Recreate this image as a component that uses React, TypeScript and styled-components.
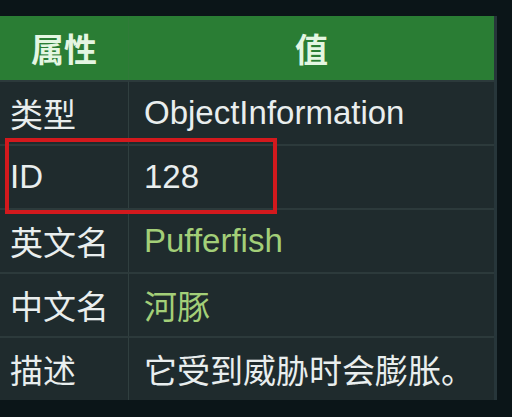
import React from "react";
import styled, { createGlobalStyle } from "styled-components";

const Global = createGlobalStyle`
  html, body { margin: 0; padding: 0; background: #0b1518; }
  body { font-family: "Liberation Sans", "Noto Sans CJK SC", sans-serif; }
`;

const Page = styled.div`
  width: 512px;
  height: 417px;
  padding-top: 16px;
  box-sizing: border-box;
  background: #0b1518;
  position: relative;
  overflow: hidden;
`;

const Table = styled.div`
  width: 497px;
  display: grid;
  grid-template-columns: 128px 1fr;
  border-right: 3px solid #27363a;
  box-sizing: border-box;
  background: #1f2b2d;
`;

const HeadCell = styled.div<{ $first?: boolean }>`
  height: 64px;
  background: #2a7d34;
  color: #e4f6e2;
  font-weight: bold;
  font-size: 33px;
  display: flex;
  align-items: center;
  justify-content: center;
  border-left: ${(p) => (p.$first ? "none" : "1px solid #2f7a38")};
`;

const Cell = styled.div<{ $key?: boolean; $green?: boolean }>`
  height: 64px;
  box-sizing: border-box;
  border-top: 2px solid #2c3a3b;
  border-left: ${(p) => (p.$key ? "none" : "1px solid #303f3f")};
  display: flex;
  align-items: center;
  padding-left: ${(p) => (p.$key ? "10px" : "15px")};
  font-size: 33px;
  color: ${(p) => (p.$green ? "#a3cf78" : "#e9eeee")};
  white-space: nowrap;
  overflow: hidden;
`;

const Highlight = styled.div`
  position: absolute;
  left: 5px;
  top: 138px;
  width: 272px;
  height: 76px;
  box-sizing: border-box;
  border: 4px solid #d3191d;
`;

const rows: { k: string; v: string; green?: boolean }[] = [
  { k: "类型", v: "ObjectInformation" },
  { k: "ID", v: "128" },
  { k: "英文名", v: "Pufferfish", green: true },
  { k: "中文名", v: "河豚", green: true },
  { k: "描述", v: "它受到威胁时会膨胀。" },
];

export default function App() {
  return (
    <>
      <Global />
      <Page>
        <Table>
          <HeadCell $first>属性</HeadCell>
          <HeadCell>值</HeadCell>
          {rows.map((r) => (
            <React.Fragment key={r.k}>
              <Cell $key>{r.k}</Cell>
              <Cell $green={r.green}>{r.v}</Cell>
            </React.Fragment>
          ))}
        </Table>
        <Highlight />
      </Page>
    </>
  );
}
